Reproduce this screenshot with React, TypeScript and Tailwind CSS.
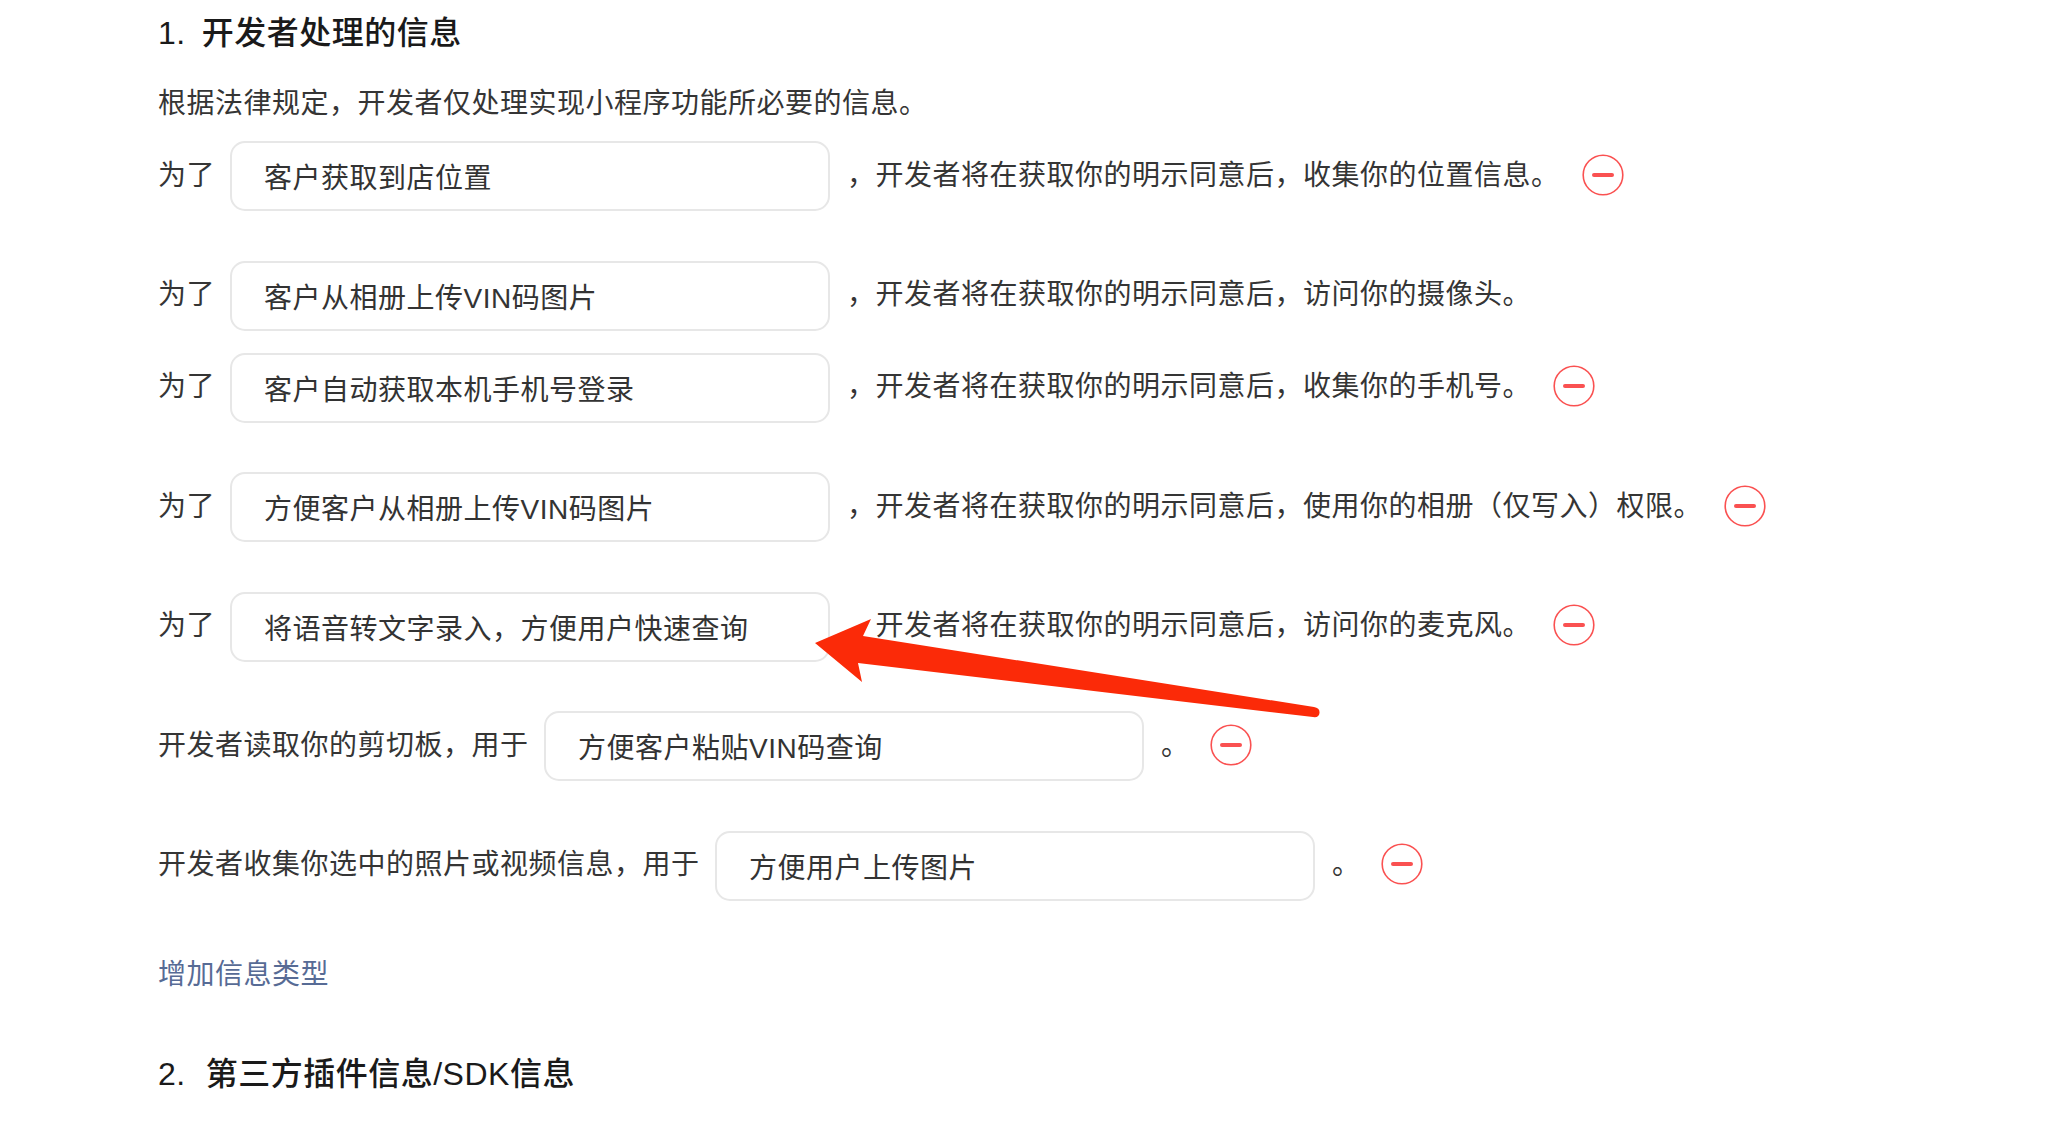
const inputClass =
  "h-[70px] w-[600px] shrink-0 rounded-[15px] border-2 border-[#e7e7e7] bg-white pl-[32px] text-[#333] outline-none";

function MinusIcon({ className }: { className: string }) {
  return (
    <svg className={`mt-[-3px] shrink-0 ${className}`} width="42" height="42" viewBox="0 0 42 42" fill="none">
      <circle cx="21" cy="21" r="19.8" stroke="#fa5151" strokeWidth="1.6" />
      <path d="M12 21h18" stroke="#fa5151" strokeWidth="4" strokeLinecap="round" />
    </svg>
  );
}

function PurposeRow({ value, after, removable = true }: { value: string; after: string; removable?: boolean }) {
  return (
    <div className={`flex h-[70px] items-center ${removable ? "mb-[49.6px]" : "mb-[22px]"}`}>
      <span className="mr-[15px] mt-[-1px]">为了</span>
      <input className={inputClass} value={value} readOnly />
      <span className="ml-[17px] mt-[-1px]">{after}</span>
      {removable && <MinusIcon className="ml-[22px]" />}
    </div>
  );
}

function UsageRow({ label, value }: { label: string; value: string }) {
  return (
    <div className="mb-[49.6px] flex h-[70px] items-center">
      <span className="mr-[15.5px] mt-[-1px]">{label}</span>
      <input className={inputClass} value={value} readOnly />
      <span className="ml-[17px] mt-[-1px]">。</span>
      <MinusIcon className="ml-[20px]" />
    </div>
  );
}

export default function App() {
  return (
    <div className="relative h-[1126px] overflow-hidden bg-white pl-[158px] pt-[11px] font-['Liberation_Sans','Noto_Sans_CJK_SC',sans-serif] text-[28px] tracking-[0.5px] text-[#353535]">
      <h2 className="text-[32px] font-medium leading-[44px] text-[#1a1a1a]">
        <span className="mr-[16px]">1.</span>开发者处理的信息
      </h2>
      <p className="mb-[17px] mt-[29px] leading-[40px]">根据法律规定，开发者仅处理实现小程序功能所必要的信息。</p>

      <PurposeRow value="客户获取到店位置" after="，开发者将在获取你的明示同意后，收集你的位置信息。" />
      <PurposeRow value="客户从相册上传VIN码图片" after="，开发者将在获取你的明示同意后，访问你的摄像头。" removable={false} />
      <PurposeRow value="客户自动获取本机手机号登录" after="，开发者将在获取你的明示同意后，收集你的手机号。" />
      <PurposeRow value="方便客户从相册上传VIN码图片" after="，开发者将在获取你的明示同意后，使用你的相册（仅写入）权限。" />
      <PurposeRow value="将语音转文字录入，方便用户快速查询" after="，开发者将在获取你的明示同意后，访问你的麦克风。" />
      <UsageRow label="开发者读取你的剪切板，用于" value="方便客户粘贴VIN码查询" />
      <UsageRow label="开发者收集你选中的照片或视频信息，用于" value="方便用户上传图片" />

      <a className="mt-[54px] block leading-[40px] text-[#576b95]" href="#">增加信息类型</a>
      <h2 className="mt-[57px] text-[32px] font-medium leading-[44px] text-[#1a1a1a]">
        <span className="mr-[20px]">2.</span>第三方插件信息/SDK信息
      </h2>

      {/* red annotation arrow drawn over the page */}
      <svg className="absolute left-0 top-0" width="2064" height="1126" fill="none">
        <path
          d="M815 643 L871 619 L863 636 L1314 707 Q1320 708 1319.5 713 Q1319 718 1313 717 L858 663 L862 682 Z"
          fill="#fb2a08"
        />
      </svg>
    </div>
  );
}
